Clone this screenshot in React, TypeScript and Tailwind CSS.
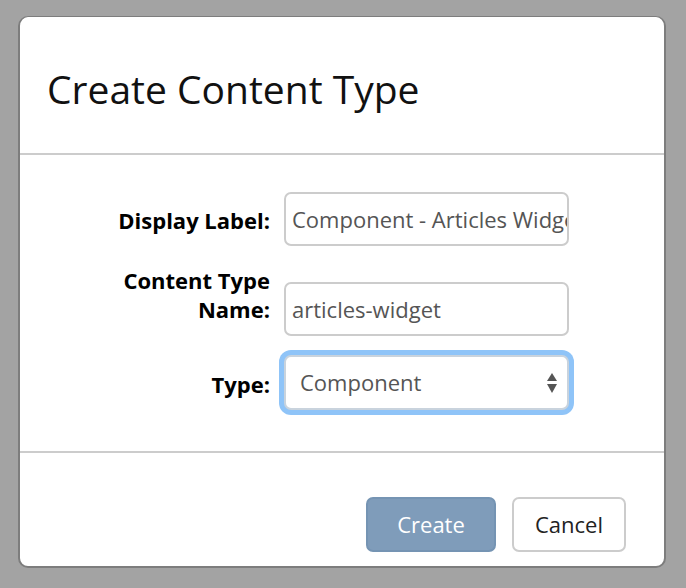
export default function App() {
  return (
    <div
      className="h-[588px] w-[686px] overflow-hidden bg-[#a3a3a3] pt-[16px] pl-[18px]"
      style={{ fontFamily: '"Open Sans", sans-serif' }}
    >
      <div className="h-[552px] w-[648px] overflow-hidden rounded-[10px] border-2 border-t border-[#7d7d7d] bg-white">
        <div className="flex h-[138px] items-center border-b-2 border-[#cccccc] px-[27px] pt-[6px]">
          <h1 className="text-[39px] leading-none text-[#111]">Create Content Type</h1>
        </div>

        <div className="h-[298px] border-b-2 border-[#cccccc] pt-[37px]">
          <div className="flex h-[54px] items-center">
            <label className="w-[250px] pt-[2px] text-right text-[22px] font-bold leading-[30px] text-black">
              Display Label:
            </label>
            <div className="ml-[14px] flex h-[54px] w-[285px] items-center overflow-hidden rounded-[7px] border-2 border-[#cccccc] pl-[6px] text-[22px] whitespace-nowrap text-[#555]">
              Component - Articles Widget
            </div>
          </div>

          <div className="mt-[20px] flex items-start">
            <label className="w-[250px] text-right text-[22px] font-bold leading-[28.5px] text-black">
              Content Type
              <br />
              Name:
            </label>
            <div className="mt-[16px] ml-[14px] flex h-[54px] w-[285px] items-center rounded-[7px] border-2 border-[#cccccc] pl-[6px] text-[22px] text-[#555]">
              articles-widget
            </div>
          </div>

          <div className="mt-[19px] flex h-[55px] items-center">
            <label className="w-[250px] pt-[2px] text-right text-[22px] font-bold leading-[30px] text-black">
              Type:
            </label>
            <div className="ml-[14px] flex h-[55px] w-[285px] items-center justify-between rounded-[7px] border-2 border-[#c9d3dd] bg-white pr-[10px] pl-[14px] text-[22px] text-[#555] shadow-[0_0_0_5px_#8fc4f8]">
              <span>Component</span>
              <svg width="10" height="20" viewBox="0 0 10 20">
                <path d="M5 0 L10 8 L0 8 Z" fill="#555" />
                <path d="M0 11 L10 11 L5 20 Z" fill="#555" />
              </svg>
            </div>
          </div>
        </div>

        <div className="flex justify-end gap-[16px] pt-[44px] pr-[38px]">
          <button className="h-[55px] w-[130px] rounded-[7px] border-2 border-[#7594b3] bg-[#7f9cba] text-[22px] text-white">
            Create
          </button>
          <button className="h-[55px] w-[114px] rounded-[7px] border-2 border-[#cccccc] bg-white text-[22px] text-[#222]">
            Cancel
          </button>
        </div>
      </div>
    </div>
  );
}
